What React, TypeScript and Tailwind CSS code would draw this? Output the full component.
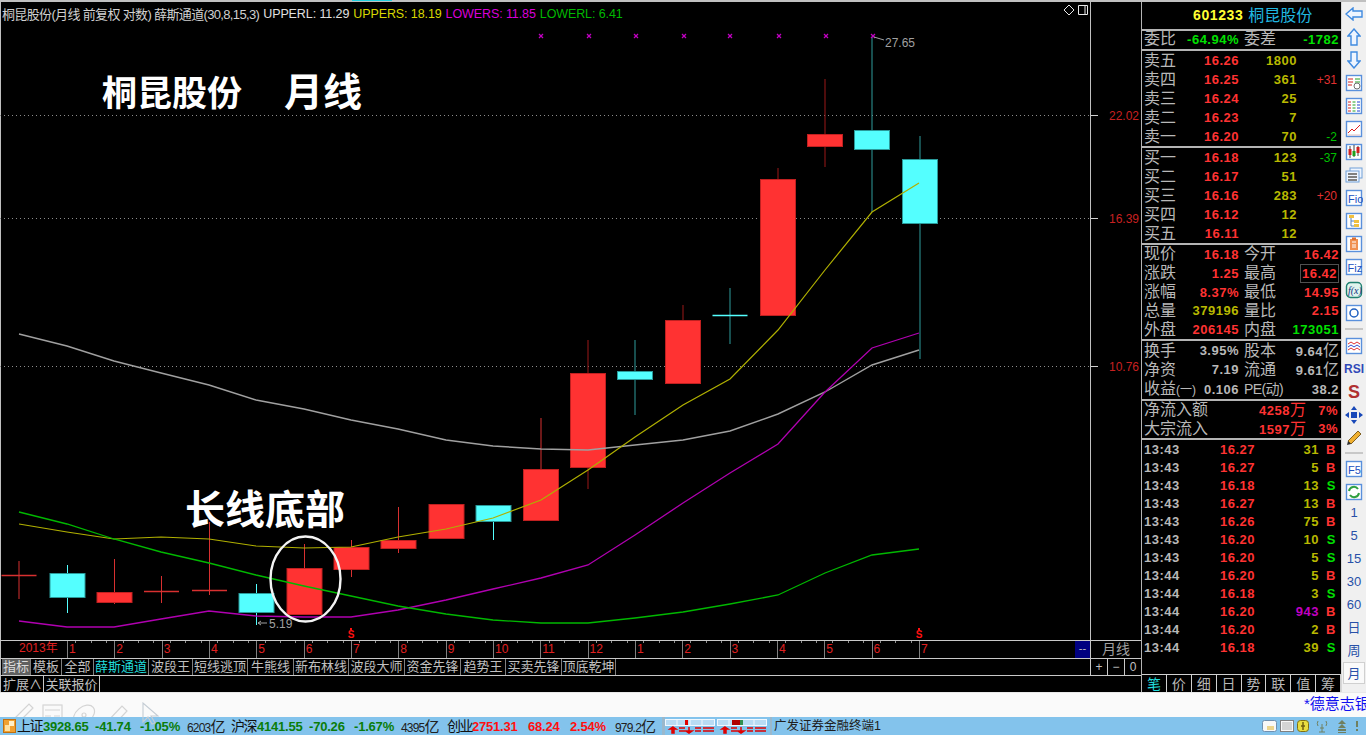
import type { ReactNode } from 'react'

// candle: centre x, body left/right is x±17.5, top/bottom of body, wick top/bottom, up = red
const CANDLES = [
  { x: 19, t: 575, b: 576, hi: 561, lo: 599, up: true },
  { x: 67.5, t: 573, b: 597, hi: 565, lo: 613, up: false },
  { x: 114.5, t: 592, b: 602, hi: 559, lo: 604, up: true },
  { x: 161.5, t: 591, b: 592, hi: 576, lo: 603, up: true },
  { x: 209.5, t: 590, b: 591, hi: 522, lo: 595, up: true },
  { x: 256.5, t: 593, b: 612, hi: 584, lo: 625, up: false },
  { x: 304.5, t: 568, b: 614, hi: 544, lo: 614, up: true },
  { x: 351.5, t: 547, b: 569, hi: 540, lo: 577, up: true },
  { x: 398.5, t: 540, b: 548, hi: 507, lo: 553, up: true },
  { x: 446.5, t: 504, b: 538, hi: 504, lo: 538, up: true },
  { x: 493.5, t: 505, b: 521, hi: 505, lo: 540, up: false },
  { x: 541, t: 469, b: 520, hi: 418, lo: 521, up: true },
  { x: 588, t: 373, b: 467, hi: 340, lo: 489, up: true },
  { x: 635, t: 371, b: 379, hi: 340, lo: 415, up: false },
  { x: 683, t: 320, b: 383, hi: 305, lo: 384, up: true },
  { x: 730, t: 315, b: 316, hi: 288, lo: 344, up: false },
  { x: 778, t: 179, b: 315, hi: 168, lo: 315, up: true },
  { x: 825, t: 134, b: 146, hi: 79, lo: 167, up: true },
  { x: 872, t: 130, b: 149, hi: 37, lo: 212, up: false },
  { x: 920, t: 159, b: 223, hi: 136, lo: 359, up: false },
]

const XS = [19, 67, 114, 161, 209, 256, 304, 351, 398, 446, 493, 541, 588, 635, 683, 730, 778, 825, 872, 919]
const GRAY_Y = [334, 346, 361, 373, 385, 400, 409, 420, 429, 440, 446, 449, 450, 445, 440, 431, 414, 392, 365, 350]
const YELLOW_Y = [524, 532, 539, 537, 539, 546, 548, 547, 537, 529, 518, 500, 470, 437, 405, 379, 330, 270, 212, 183]
const MAGENTA_Y = [621, 627, 627, 619, 611, 616, 617, 617, 610, 600, 589, 578, 565, 535, 503, 473, 444, 392, 348, 333]
const GREEN_Y = [512, 524, 539, 552, 563, 575, 586, 596, 606, 614, 620, 623, 623, 618, 612, 604, 595, 573, 555, 549]

const pts = (ys: number[]) => ys.map((y, i) => `${XS[i]},${y}`).join(' ')

const STOPS = [541, 589, 636, 684, 730, 779, 826, 873]

const SELLS = [
  ['卖五', '16.26', '1800', ''],
  ['卖四', '16.25', '361', '+31'],
  ['卖三', '16.24', '25', ''],
  ['卖二', '16.23', '7', ''],
  ['卖一', '16.20', '70', '-2'],
]
const BUYS = [
  ['买一', '16.18', '123', '-37'],
  ['买二', '16.17', '51', ''],
  ['买三', '16.16', '283', '+20'],
  ['买四', '16.12', '12', ''],
  ['买五', '16.11', '12', ''],
]
const TICKS = [
  ['13:43', '16.27', '31', 'B'],
  ['13:43', '16.27', '5', 'B'],
  ['13:43', '16.18', '13', 'S'],
  ['13:43', '16.27', '13', 'B'],
  ['13:43', '16.26', '75', 'B'],
  ['13:43', '16.20', '10', 'S'],
  ['13:43', '16.20', '5', 'S'],
  ['13:44', '16.20', '5', 'B'],
  ['13:44', '16.18', '3', 'S'],
  ['13:44', '16.20', '943', 'B'],
  ['13:44', '16.20', '2', 'B'],
  ['13:44', '16.18', '39', 'S'],
]
const TABS = [
  ['指标', 'w-[29px]', 'bg-[#606060] text-[#dcdcdc]'],
  ['模板', 'w-[31px]', 'text-[#c0c0c0]'],
  ['全部', 'w-[32px]', 'text-[#c0c0c0]'],
  ['薛斯通道', 'w-[55px]', 'text-[#22dcdc]'],
  ['波段王', 'w-[44px]', 'text-[#c0c0c0]'],
  ['短线逃顶', 'w-[55px]', 'text-[#c0c0c0]'],
  ['牛熊线', 'w-[46px]', 'text-[#c0c0c0]'],
  ['新布林线', 'w-[55px]', 'text-[#c0c0c0]'],
  ['波段大师', 'w-[56px]', 'text-[#c0c0c0]'],
  ['资金先锋', 'w-[56px]', 'text-[#c0c0c0]'],
  ['趋势王', 'w-[45px]', 'text-[#c0c0c0]'],
  ['买卖先锋', 'w-[56px]', 'text-[#c0c0c0]'],
  ['顶底乾坤', 'w-[54px]', 'text-[#c0c0c0]'],
]
const MONTHS = ['1', '2', '3', '4', '5', '6', '7', '8', '9', '10', '11', '12', '1', '2', '3', '4', '5', '6', '7']
const SIDE_TABS = ['笔', '价', '细', '日', '势', '联', '值', '筹']

const NUM = 'text-[13px] font-bold tracking-[0.5px] leading-none'
const CJK = 'text-[16px] leading-none text-[#b8b8b8]'

function Cell({ w, className, children }: { w: string; className?: string; children?: ReactNode }) {
  return <div className={`${w} shrink-0 text-right whitespace-nowrap ${className ?? ''}`}>{children}</div>
}

function Label({ w, children }: { w: string; children: ReactNode }) {
  return <div className={`${w} shrink-0 pl-[2px] whitespace-nowrap ${CJK}`}>{children}</div>
}

function Line() {
  return <div className="h-[2px] bg-[#b4b4b4] shrink-0" />
}

function OrderRows({ rows, h }: { rows: string[][]; h: string }) {
  return (
    <div className={`${h} flex flex-col justify-around shrink-0`}>
      {rows.map(r => (
        <div key={r[0]} className="flex items-center h-[19px]">
          <Label w="w-[50px]">{r[0]}</Label>
          <Cell w="w-[47px]" className={`${NUM} text-[#ff3232]`}>{r[1]}</Cell>
          <Cell w="w-[58px]" className={`${NUM} text-[#b8b800]`}>{r[2]}</Cell>
          <Cell w="w-[40px]" className={`text-[12px] leading-none ${r[3].startsWith('+') ? 'text-[#e03030]' : 'text-[#00c000]'}`}>{r[3]}</Cell>
        </div>
      ))}
    </div>
  )
}

function QuoteRow({ a, av, ac, b, bv, bc, boxed }: { a: ReactNode; av: ReactNode; ac: string; b: ReactNode; bv: ReactNode; bc: string; boxed?: boolean }) {
  return (
    <div className="flex items-center h-[19px]">
      <Label w="w-[50px]">{a}</Label>
      <Cell w="w-[47px]" className={`${NUM} ${ac}`}>{av}</Cell>
      <div className={`w-[46px] shrink-0 pl-[5px] whitespace-nowrap ${CJK}`}>{b}</div>
      {boxed ? (
        <Cell w="w-[39px]" className={`${NUM} ${bc} border border-[#505050] py-[2px] pr-[1px] ml-[15px]`}>{bv}</Cell>
      ) : (
        <Cell w="w-[54px]" className={`${NUM} ${bc}`}>{bv}</Cell>
      )}
    </div>
  )
}

function Yi({ v }: { v: string }) {
  return <>{v}<span className="text-[16px] font-normal tracking-normal">亿</span></>
}

function Panel() {
  return (
    <div className="w-[200px] shrink-0 bg-black flex flex-col border-l border-[#b4b4b4] h-full">
      <div className="h-[27px] flex items-center shrink-0 pl-[51px] gap-[5px]">
        <span className="text-[14px] font-bold tracking-[0.6px] text-[#ffff33]">601233</span>
        <span className="text-[16px] leading-none text-[#20b8e0]">桐昆股份</span>
      </div>
      <Line />
      <div className="flex items-center h-[18px] shrink-0 -translate-y-px">
        <Label w="w-[43px]">委比</Label>
        <Cell w="w-[54px]" className={`${NUM} text-[#00e000]`}>-64.94%</Cell>
        <div className={`w-[46px] shrink-0 pl-[5px] ${CJK}`}>委差</div>
        <Cell w="w-[54px]" className={`${NUM} text-[#00e000]`}>-1782</Cell>
      </div>
      <Line />
      <OrderRows rows={SELLS} h="h-[95px]" />
      <Line />
      <OrderRows rows={BUYS} h="h-[95px]" />
      <Line />
      <div className="h-[94px] shrink-0 flex flex-col justify-around">
        <QuoteRow a="现价" av="16.18" ac="text-[#ff3232]" b="今开" bv="16.42" bc="text-[#ff3232]" />
        <QuoteRow a="涨跌" av="1.25" ac="text-[#ff3232]" b="最高" bv="16.42" bc="text-[#ff3232]" boxed />
        <QuoteRow a="涨幅" av="8.37%" ac="text-[#ff3232]" b="最低" bv="14.95" bc="text-[#ff3232]" />
        <QuoteRow a="总量" av="379196" ac="text-[#b8b800]" b="量比" bv="2.15" bc="text-[#ff3232]" />
        <QuoteRow a="外盘" av="206145" ac="text-[#ff3232]" b="内盘" bv="173051" bc="text-[#00e000]" />
      </div>
      <Line />
      <div className="h-[58px] shrink-0 flex flex-col justify-around">
        <QuoteRow a="换手" av="3.95%" ac="text-[#b8b8b8]" b="股本" bv={<Yi v="9.64" />} bc="text-[#b8b8b8]" />
        <QuoteRow a="净资" av="7.19" ac="text-[#b8b8b8]" b="流通" bv={<Yi v="9.61" />} bc="text-[#b8b8b8]" />
        <QuoteRow a={<>收益<span className="text-[12px]">(一)</span></>} av="0.106" ac="text-[#b8b8b8]" b={<span className="text-[14px] tracking-[-0.6px]">PE(动)</span>} bv="38.2" bc="text-[#b8b8b8]" />
      </div>
      <Line />
      <div className="h-[37px] shrink-0 flex flex-col justify-around">
        {[['净流入额', '4258', '7%'], ['大宗流入', '1597', '3%']].map(r => (
          <div key={r[0]} className="flex items-center h-[19px]">
            <Label w="w-[90px]">{r[0]}</Label>
            <Cell w="w-[74px]" className={`${NUM} text-[#ff3232]`}>{r[1]}<span className="text-[16px] font-normal tracking-normal">万</span></Cell>
            <Cell w="w-[32px]" className={`${NUM} text-[#ff3232]`}>{r[2]}</Cell>
          </div>
        ))}
      </div>
      <Line />
      <div className="flex-1 min-h-0 flex flex-col">
        {TICKS.map((t, i) => (
          <div key={i} className="flex items-center h-[18px]">
            <div className={`w-[50px] pl-[2px] ${NUM} text-[#b8b8b8]`}>{t[0]}</div>
            <Cell w="w-[63px]" className={`${NUM} text-[#ff3232]`}>{t[1]}</Cell>
            <Cell w="w-[64px]" className={`${NUM} ${t[2] === '943' ? 'text-[#c000c0]' : 'text-[#b8b800]'}`}>{t[2]}</Cell>
            <Cell w="w-[17px]" className={`${NUM} ${t[3] === 'B' ? 'text-[#ff3232]' : 'text-[#00e000]'}`}>{t[3]}</Cell>
          </div>
        ))}
      </div>
      <div className="h-[18px] shrink-0 flex border-t border-[#d0d0d0]">
        {SIDE_TABS.map((t, i) => (
          <div key={t} className={`flex-1 flex items-center justify-center text-[14px] leading-none border-r border-[#d0d0d0] ${i === 0 ? 'text-[#22dcdc]' : 'text-[#b8b8b8]'}`}>{t}</div>
        ))}
      </div>
    </div>
  )
}

const Frame = ({ children }: { children: ReactNode }) => (
  <svg width="18" height="18" viewBox="0 0 18 18" fill="none">
    <rect x="1.5" y="1.5" width="15" height="15" fill="#fff" stroke="#5a90dc" strokeWidth="1.4" />
    {children}
  </svg>
)

const TOOL_ICONS: ReactNode[] = [
  <svg key="l" width="18" height="14" viewBox="0 0 18 14" fill="#eef5ff" stroke="#3f8ae0" strokeWidth="1.4"><path d="M1 7 8 1v3h9v6H8v3z" /></svg>,
  <svg key="u" width="14" height="18" viewBox="0 0 14 18" fill="#eef5ff" stroke="#3f8ae0" strokeWidth="1.4"><path d="M7 1l6 7h-3v9H4V8H1z" /></svg>,
  <svg key="d" width="14" height="18" viewBox="0 0 14 18" fill="#eef5ff" stroke="#3f8ae0" strokeWidth="1.4"><path d="M7 17 1 10h3V1h6v9h3z" /></svg>,
  <Frame key="a"><path d="M3 5h5M3 8h5M3 11h4" stroke="#d02020" /><path d="M10 5h5M10 8h5" stroke="#20a020" /><circle cx="12" cy="12" r="3" stroke="#707070" /></Frame>,
  <Frame key="b"><path d="M3 5h3M3 8h3M3 11h3M3 14h3" stroke="#d02020" /><path d="M7.5 5h3M7.5 8h3M7.5 11h3M7.5 14h3" stroke="#20a020" /><path d="M12 5h3M12 8h3M12 11h3M12 14h3" stroke="#2040d0" /></Frame>,
  <Frame key="c"><path d="M3 13 7 9l2 2 6-6" stroke="#e02020" /><path d="M3 15h12" stroke="#e0c0c0" /></Frame>,
  <Frame key="e"><path d="M5 3v12M9 2v12M13 3v10" stroke="#404040" /><rect x="3.5" y="6" width="3" height="6" fill="#d02020" /><rect x="7.5" y="8" width="3" height="5" fill="#20a020" /><rect x="11.5" y="4" width="3" height="6" fill="#d02020" /></Frame>,
  <svg key="f" width="18" height="16" viewBox="0 0 18 16" fill="#eef5ff" stroke="#70a0d8"><rect x="5" y="1" width="12" height="10" /><rect x="1" y="4" width="13" height="11" /><path d="M3 7h9M3 10h9M3 13h9" stroke="#808080" strokeWidth="2" /></svg>,
  <Frame key="g"><text x="3" y="13.5" fontSize="11" fill="#2050c0" fontFamily="Liberation Sans">Fio</text></Frame>,
  <Frame key="h"><rect x="4" y="3" width="5" height="3" fill="#f0c040" /><rect x="9" y="8" width="5" height="3" fill="#f0c040" /><rect x="9" y="12" width="5" height="3" fill="#f0c040" /><path d="M6 6v8h3M6 9h3" stroke="#5080c0" /></Frame>,
  <Frame key="i"><rect x="5" y="4" width="8" height="11" fill="#f09050" /><path d="M7 7h4M7 10h4M7 12h4" stroke="#fff" /><rect x="7" y="2.5" width="4" height="2.5" fill="#e07030" /></Frame>,
  <Frame key="j"><text x="2.5" y="13.5" fontSize="11" fill="#2050c0" fontFamily="Liberation Sans">Fiz</text></Frame>,
  <svg key="k" width="18" height="18" viewBox="0 0 18 18" fill="none"><rect x="1.5" y="1.5" width="15" height="15" rx="4" fill="#e0f4ee" stroke="#208070" strokeWidth="1.4" /><text x="3" y="13" fontSize="10" fontStyle="italic" fill="#103080" fontFamily="Liberation Serif">f(x)</text></svg>,
  <Frame key="m"><circle cx="9" cy="9" r="4" stroke="#2060c0" strokeWidth="1.5" /></Frame>,
]
const TOOL_ICONS_2: ReactNode[] = [
  <Frame key="n"><path d="M3 7l3-2 3 2 3-2 3 2" stroke="#e03030" /><path d="M3 10l3-2 3 2 3-2 3 2" stroke="#3050d0" /><path d="M3 13l3-2 3 2 3-2 3 2" stroke="#e03030" /></Frame>,
  <span key="r" className="text-[12px] font-bold text-[#3048b8] leading-none">RSI</span>,
  <span key="s" className="text-[18px] font-bold text-[#b03030] leading-none">S</span>,
  <svg key="v" width="18" height="18" viewBox="0 0 18 18" fill="#1848b8"><path d="M9 0l3 4H6zM9 18l-3-4h6zM0 9l4-3v6zM18 9l-4 3V6z" /><rect x="6" y="6" width="6" height="6" /></svg>,
  <svg key="w" width="18" height="18" viewBox="0 0 18 18"><path d="M3 12 13 2l3 3L6 15z" fill="#f0b030" stroke="#806020" /><path d="M3 12l-1 4 4-1z" fill="#303030" /></svg>,
]
const TOOL_ICONS_3: ReactNode[] = [
  <Frame key="x"><text x="3" y="13.5" fontSize="11" fill="#2050c0" fontFamily="Liberation Sans">F5</text></Frame>,
  <Frame key="y"><path d="M4 8a5 5 0 0 1 9-2M14 10a5 5 0 0 1-9 2" stroke="#30a040" strokeWidth="2" /></Frame>,
]
const PERIODS = ['1', '5', '15', '30', '60', '日', '周']

function Toolbar() {
  return (
    <div className="flex-1 bg-[#f0f0f0] flex flex-col items-center h-full border-l border-[#d8d8d8]">
      {TOOL_ICONS.map((ic, i) => <div key={i} className="h-[23px] flex items-center justify-center shrink-0">{ic}</div>)}
      <div className="w-[18px] h-[2px] bg-[#c8c8c8] my-[4px] shrink-0" />
      {TOOL_ICONS_2.map((ic, i) => <div key={i} className="h-[23px] flex items-center justify-center shrink-0">{ic}</div>)}
      <div className="w-[18px] h-[2px] bg-[#c8c8c8] my-[3px] shrink-0" />
      {TOOL_ICONS_3.map((ic, i) => <div key={i} className="h-[23px] flex items-center justify-center shrink-0">{ic}</div>)}
      <div className="-mt-[2px] flex flex-col items-center shrink-0">
        {PERIODS.map(p => <div key={p} className="h-[23px] flex items-center justify-center shrink-0 text-[13px] text-[#2850a8] leading-none">{p}</div>)}
      </div>
      <div className="w-[22px] h-[22px] shrink-0 flex items-center justify-center text-[13px] text-[#2850a8] leading-none bg-[#fafafa] border border-[#d0d0d0]">月</div>
    </div>
  )
}

function Chart() {
  return (
    <svg width="1141" height="638" viewBox="0 2 1141 638" className="block shrink-0">
      {[115.5, 218.5, 366.5].map(y => (
        <g key={y}>
          <line x1="0" x2="1090" y1={y} y2={y} stroke="#8c8c8c" strokeDasharray="1 3" />
          <line x1="1090" x2="1098" y1={y} y2={y} stroke="#d0d0d0" />
        </g>
      ))}
      <line x1="1090.5" x2="1090.5" y1="2" y2="640" stroke="#c0c0c0" />
      <g fontFamily="Liberation Sans" fontSize="12" fill="#c82020" textAnchor="end">
        <text x="1139" y="120">22.02</text>
        <text x="1139" y="223">16.39</text>
        <text x="1139" y="371">10.76</text>
      </g>

      {CANDLES.map((c, i) => {
        const dim = i >= 12
        const wick = c.up ? (dim ? '#9c1818' : '#d83030') : dim ? '#2f9c9c' : '#54ffff'
        const isDoji = c.b - c.t <= 1
        return (
          <g key={i}>
            <line x1={c.x} x2={c.x} y1={c.hi} y2={c.lo} stroke={wick} />
            {isDoji ? (
              <line x1={c.x - 17.5} x2={c.x + 17.5} y1={c.t + 0.5} y2={c.t + 0.5} stroke={c.up ? '#d83030' : '#54ffff'} strokeWidth="1.5" />
            ) : (
              <rect x={c.x - 17.5} y={c.t + 0.5} width="35" height={c.b - c.t} fill={c.up ? '#ff3232' : '#54ffff'} stroke={c.up ? '#c02020' : '#2a9a9a'} />
            )}
          </g>
        )
      })}

      <polyline points={pts(GRAY_Y)} fill="none" stroke="#a0a0a0" strokeWidth="1.4" />
      <polyline points={pts(YELLOW_Y)} fill="none" stroke="#b0b000" strokeWidth="1.2" />
      <polyline points={pts(MAGENTA_Y)} fill="none" stroke="#b000b0" strokeWidth="1.3" />
      <polyline points={pts(GREEN_Y)} fill="none" stroke="#00b800" strokeWidth="1.3" />

      {STOPS.map(x => (
        <g key={x} stroke="#c000c0" strokeWidth="1.3">
          <line x1={x - 2} x2={x + 2} y1="34" y2="38" />
          <line x1={x + 2} x2={x - 2} y1="34" y2="38" />
        </g>
      ))}
      <path d="M874 37l10 3" stroke="#a0a0a0" fill="none" />
      <path d="M258 623h9M258 623l3-2M258 623l3 2" stroke="#a0a0a0" fill="none" />
      <g fontFamily="Liberation Sans" fontSize="12" fill="#a0a0a0">
        <text x="885" y="47">27.65</text>
        <text x="269" y="628">5.19</text>
      </g>
      <g fontFamily="Liberation Sans" fontSize="10" fontWeight="bold" fill="#ff1010" textAnchor="middle">
        <text x="351" y="637.5">S</text>
        <text x="919" y="637.5">S</text>
      </g>
      <path d="M351 628v2M919 628v2" stroke="#ff1010" strokeWidth="2" />

      <path d="M1069 5l5 5-5 5-5-5z" fill="none" stroke="#e8e8e8" />
      <path d="M1078.5 5.5h9v9h-9zM1085 5.5v9" fill="none" stroke="#e8e8e8" />

      <g fontFamily="Noto Sans CJK SC" fontWeight="700" fill="#fff">
        <text x="102" y="106" fontSize="35">桐昆股份</text>
        <text x="284" y="106" fontSize="39">月线</text>
        <text x="185" y="524" fontSize="40">长线底部</text>
      </g>
      <ellipse cx="305.5" cy="579" rx="35" ry="42.5" fill="none" stroke="#f4f4f4" strokeWidth="2.4" />
    </svg>
  )
}

function Legend() {
  return (
    <div className="absolute left-[2px] top-[3px] h-[18px] flex items-center gap-[4px] text-[12.5px] tracking-[-0.1px] leading-none whitespace-nowrap">
      <span className="text-[#d0d0d0] text-[13px] tracking-[-0.65px]">桐昆股份(月线 前复权 对数) 薛斯通道(30,8,15,3)</span>
      <span className="text-[#e0e0e0]">UPPERL: 11.29</span>
      <span className="text-[#d8d800]">UPPERS: 18.19</span>
      <span className="text-[#d800d8]">LOWERS: 11.85</span>
      <span className="text-[#00b800]">LOWERL: 6.41</span>
    </div>
  )
}

function DateAxis() {
  return (
    <div className="h-[17px] flex shrink-0 border-y border-[#c8c8c8] box-content">
      <div className="w-[67px] shrink-0 pl-[19px] text-[12px] leading-[15px] text-[#e02020]">2013年</div>
      {MONTHS.map((m, i) => (
        <div key={i} className="w-[47.33px] shrink-0 border-l border-[#808080]">
          <div className="flex justify-around h-[2px]">
            {i < 18 && [0, 1, 2].map(k => <div key={k} className="w-px h-[2px] bg-[#909090]" />)}
          </div>
          <div className="text-[12px] leading-[13px] pl-[1px] text-[#e02020]">{m}</div>
        </div>
      ))}
      <div className="flex-1" />
      <div className="w-[15px] shrink-0 bg-[#000080] text-[#c0c0c0] text-[11px] leading-[14px] text-center">--</div>
      <div className="w-[51px] shrink-0 border-l border-[#c8c8c8] text-[14px] leading-[16px] text-center text-[#a0a0a0]">月线</div>
    </div>
  )
}

function TabBar() {
  return (
    <div className="h-[16px] flex shrink-0 border-b border-[#c8c8c8] box-content pl-[2px]">
      {TABS.map(t => (
        <div key={t[0]} className={`${t[1]} ${t[2]} shrink-0 border-r border-[#808080] text-[13px] leading-[16px] text-center whitespace-nowrap`}>{t[0]}</div>
      ))}
      <div className="flex-1" />
      {['+', '−', '0'].map(s => (
        <div key={s} className="w-[17px] shrink-0 border-l border-[#c8c8c8] text-[12px] leading-[16px] text-center text-[#c0c0c0]">{s}</div>
      ))}
    </div>
  )
}

function ExtBar() {
  return (
    <div className="h-[17px] flex shrink-0 pl-[2px] text-[13px] leading-[17px] text-[#c0c0c0]">
      <div className="w-[42px] border-r border-[#c8c8c8] whitespace-nowrap text-center">扩展∧</div>
      <div className="w-[56px] border-r border-[#c8c8c8] whitespace-nowrap text-center">关联报价</div>
    </div>
  )
}

const GREEN = 'font-bold tracking-[-0.2px] text-[13px] text-[#0a7d0a]'
const RED = 'font-bold tracking-[-0.2px] text-[13px] text-[#ff1010]'
const BIG = 'text-[14px] tracking-[-1.5px] text-[#101010]'
const STATUS = [
  ['上证', 'w-[26px]', BIG],
  ['3928.65', 'w-[52px]', GREEN],
  ['-41.74', 'w-[45px]', GREEN],
  ['-1.05%', 'w-[47px]', GREEN],
  ['6203', 'w-[44px]', 'amt'],
  ['沪深', 'w-[26px]', BIG],
  ['4141.55', 'w-[52px]', GREEN],
  ['-70.26', 'w-[45px]', GREEN],
  ['-1.67%', 'w-[47px]', GREEN],
  ['4395', 'w-[46px]', 'amt'],
  ['创业', 'w-[25px]', BIG],
  ['2751.31', 'w-[56px]', RED],
  ['68.24', 'w-[42px]', RED],
  ['2.54%', 'w-[45px]', RED],
  ['979.2', 'w-[47px]', 'amt'],
]

function MiniBars({ seed }: { seed: number }) {
  return (
    <svg width="50" height="18" viewBox="0 0 50 18">
      <rect x="0.5" y="2.5" width="49" height="6" fill="#b8dcf4" stroke="#f0f8ff" />
      <path d="M12 2v6M25 2v6M37 2v6" stroke="#f0f8ff" />
      {seed === 0 ? <rect x="20" y="3" width="3" height="5" fill="#e00000" /> : <><rect x="15" y="3" width="8" height="5" fill="#b00000" /><rect x="23" y="3" width="3" height="5" fill="#309050" /></>}
      <path d="M8 10l3 2H9v4H7v-4H5zM14 11h6M14 14h6M24 10v4h-3l3 2 3-2h-3M30 11h6M30 14h6M38 11h11M38 14h11" fill="#e00000" stroke="#e00000" strokeWidth="1.5" />
    </svg>
  )
}

function StatusBar() {
  return (
    <div className="h-[18px] bg-[#83c3ec] flex items-center shrink-0 relative">
      <div className="w-[17px] shrink-0 pl-[3px] flex items-center">
        <svg width="13" height="14" viewBox="0 0 13 14"><rect x="0.5" y="0.5" width="12" height="13" fill="#f0a030" stroke="#c07010" /><rect x="2" y="6" width="5" height="6" fill="#ffe0a0" /><rect x="6" y="2" width="5" height="5" fill="#fff0c8" /></svg>
      </div>
      {STATUS.map(s => (
        <div key={s[0]} className={`${s[1]} shrink-0 whitespace-nowrap leading-none ${s[2] === 'amt' ? 'text-[#202020] text-[12px] tracking-[-0.8px]' : s[2]}`}>
          {s[0]}
          {s[2] === 'amt' && <span className="text-[15px] tracking-normal">亿</span>}
        </div>
      ))}
      <div className="w-[3px] h-full bg-[#9ab8cc] shrink-0" />
      <div className="flex gap-[2px] shrink-0"><MiniBars seed={0} /><MiniBars seed={1} /></div>
      <div className="w-[2px] h-full bg-[#9ab8cc] shrink-0 ml-[3px] mr-[2px]" />
      <div className="text-[12.5px] leading-none text-[#202020] whitespace-nowrap">广发证券金融终端1</div>
      <div className="flex-1" />
      <div className="flex items-center gap-[3px] pr-[7px]">
        <svg width="15" height="12" viewBox="0 0 15 12"><rect x="0.5" y="0.5" width="14" height="11" rx="2" fill="#f8f8f8" stroke="#7090b0" /><path d="M5 7h7M5 9h7" stroke="#e0b020" /></svg>
        <svg width="14" height="12" viewBox="0 0 14 12"><rect x="0.5" y="0.5" width="13" height="11" fill="#f8f8f8" stroke="#808080" /><path d="M2 3h10M2 5h10M2 7h10M2 9h10" stroke="#b0b0b0" /></svg>
        <svg width="12" height="12" viewBox="0 0 12 12"><rect x="0.5" y="0.5" width="11" height="11" rx="3" fill="#e8dc40" stroke="#807010" /><path d="M6 2v8M4 6h4" stroke="#706010" strokeWidth="1.5" /></svg>
        <svg width="14" height="14" viewBox="0 0 14 14" fill="none" stroke="#708060" className="ml-[3px]"><path d="M7 5v8M4 13h6M5 9h4M3 2a5 5 0 0 0 0 5M11 2a5 5 0 0 1 0 5" /></svg>
        <svg width="10" height="13" viewBox="0 0 10 13" fill="#708060" className="ml-[5px]"><path d="M5 0 9 4H1zM5 4 9 8H1zM1 9h8v2H1zM1 12h8v1H1z" /></svg>
        <svg width="4" height="10" viewBox="0 0 4 10" fill="#708060" className="ml-[5px]"><rect x="1" y="0" width="2" height="6" /><rect x="1" y="8" width="2" height="2" /></svg>
      </div>
    </div>
  )
}

function DrawStrip() {
  return (
    <div className="h-[25px] bg-[#fafafa] shrink-0 border-t border-[#e8e8e8] relative flex items-start justify-end">
      <span className="text-[15px] leading-[22px] text-[#1010f0] whitespace-nowrap w-[62px] overflow-hidden">*德意志银行</span>
      {/* faded drawing tools: the status bar covers their lower ends, only the cursor lies over it */}
      <svg width="140" height="26" viewBox="0 0 140 26" className="absolute left-0 top-[8px]" fill="none" stroke="#d4d4d4" strokeWidth="1.2">
        <path d="M10 22 29 3l4 4-19 19-5 1z" />
        <rect x="43" y="4" width="19" height="19" />
        <path d="M45 9h15M45 15h6M54 15h6M45 20h6M54 20h6" />
        <ellipse cx="84" cy="14" rx="12" ry="8" transform="rotate(-40 84 14)" />
        <circle cx="84" cy="14" r="2" />
        <path d="M106 22l16-17 5 5-16 17h-5z" />
      </svg>
      <svg width="18" height="26" viewBox="0 0 18 26" className="absolute left-[142px] top-[9px] z-10" fill="none" stroke="#c4ccd4" strokeWidth="1.1">
        <path d="M1 1v19l5-5 4 7 3-1-4-7h7z" />
      </svg>
    </div>
  )
}

export default function App() {
  return (
    <div className="w-[1366px] h-[735px] overflow-hidden flex flex-col bg-black font-['Liberation_Sans','Noto_Sans_CJK_SC',sans-serif]">
      <div className="h-[2px] bg-[#c0c0c0] shrink-0 pl-[352px]">
        <div className="w-[40px] h-px bg-[#20d0e0]" />
      </div>
      <div className="flex h-[690px] shrink-0">
        <div className="w-[1141px] shrink-0 flex flex-col relative shadow-[inset_1px_0_0_#c0c0c0]">
          <Chart />
          <Legend />
          <DateAxis />
          <TabBar />
          <ExtBar />
        </div>
        <Panel />
        <Toolbar />
      </div>
      <DrawStrip />
      <StatusBar />
    </div>
  )
}
